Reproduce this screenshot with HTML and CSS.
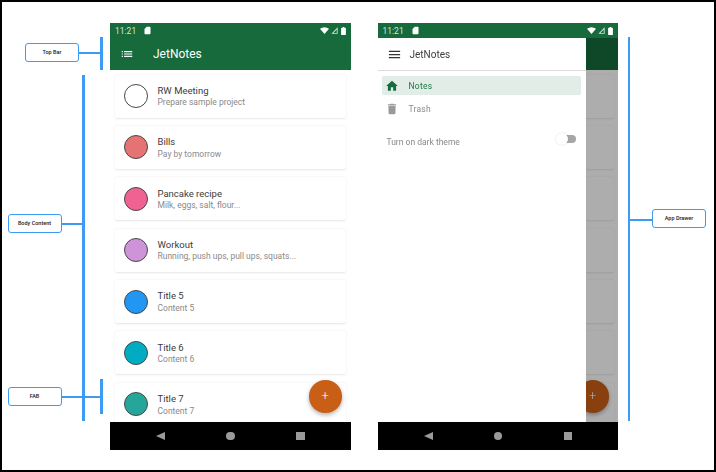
FILE: index.html
```html
<!DOCTYPE html>
<html lang="en">
<head>
    <meta charset="UTF-8">
    <title>JetNotes</title>
    <link rel="stylesheet" href="styles.css">
</head>
<body>
<div class="frame">
    <!-- notes screen -->
    <div class="phone">
        <div class="statusBar">
            <span class="time">11:21</span>
            <svg class="sdIcon" viewBox="0 0 24 24"><path d="M18 2h-8L4 8v12c0 1.1.9 2 2 2h12c1.1 0 2-.9 2-2V4c0-1.1-.9-2-2-2z"/></svg>
            <span class="statusRight">
                <svg class="wifiIcon" viewBox="0 0 24 18"><path d="M12 18 24 4C20 1.400 16 0 12 0S4 1.400 0 4z"/></svg>
                <svg class="signalIcon" viewBox="0 0 20 20"><path d="M19 1v18H1zM16.500 7 7 17h9.500z" fill-rule="evenodd"/></svg>
                <svg class="batteryIcon" viewBox="0 0 12 20"><path d="M4 0h4v2h2.500c.8 0 1.500.7 1.500 1.500v15c0 .8-.7 1.500-1.500 1.500h-9C.7 20 0 19.300 0 18.500v-15C0 2.700.7 2 1.500 2H4z"/></svg>
            </span>
        </div>
        <div class="topBar">
            <svg class="listIcon" viewBox="0 0 24 24"><path d="M3 13h2v-2H3v2zm0 4h2v-2H3v2zm0-8h2V7H3v2zm4 4h14v-2H7v2zm0 4h14v-2H7v2zM7 7v2h14V7H7z"/></svg>
            <span class="topTitle">JetNotes</span>
        </div>
        <div class="noteList">
            <div class="note">
                <span class="dot dot_white"></span>
                <div class="noteBody"><div class="noteTitle">RW Meeting</div><div class="noteText">Prepare sample project</div></div>
            </div>
            <div class="note">
                <span class="dot dot_red"></span>
                <div class="noteBody"><div class="noteTitle">Bills</div><div class="noteText">Pay by tomorrow</div></div>
            </div>
            <div class="note">
                <span class="dot dot_pink"></span>
                <div class="noteBody"><div class="noteTitle">Pancake recipe</div><div class="noteText">Milk, eggs, salt, flour...</div></div>
            </div>
            <div class="note">
                <span class="dot dot_purple"></span>
                <div class="noteBody"><div class="noteTitle">Workout</div><div class="noteText">Running, push ups, pull ups, squats...</div></div>
            </div>
            <div class="note">
                <span class="dot dot_blue"></span>
                <div class="noteBody"><div class="noteTitle">Title 5</div><div class="noteText">Content 5</div></div>
            </div>
            <div class="note">
                <span class="dot dot_cyan"></span>
                <div class="noteBody"><div class="noteTitle">Title 6</div><div class="noteText">Content 6</div></div>
            </div>
            <div class="note">
                <span class="dot dot_teal"></span>
                <div class="noteBody"><div class="noteTitle">Title 7</div><div class="noteText">Content 7</div></div>
            </div>
        </div>
        <div class="fab">+</div>
        <div class="navBar">
            <span class="navBack"></span>
            <span class="navHome"></span>
            <span class="navRecent"></span>
        </div>
    </div>

    <!-- same screen with the drawer open -->
    <div class="phone">
        <div class="statusBar">
            <span class="time">11:21</span>
            <svg class="sdIcon" viewBox="0 0 24 24"><path d="M18 2h-8L4 8v12c0 1.1.9 2 2 2h12c1.1 0 2-.9 2-2V4c0-1.1-.9-2-2-2z"/></svg>
            <span class="statusRight">
                <svg class="wifiIcon" viewBox="0 0 24 18"><path d="M12 18 24 4C20 1.400 16 0 12 0S4 1.400 0 4z"/></svg>
                <svg class="signalIcon" viewBox="0 0 20 20"><path d="M19 1v18H1zM16.500 7 7 17h9.500z" fill-rule="evenodd"/></svg>
                <svg class="batteryIcon" viewBox="0 0 12 20"><path d="M4 0h4v2h2.500c.8 0 1.500.7 1.500 1.500v15c0 .8-.7 1.500-1.500 1.500h-9C.7 20 0 19.300 0 18.500v-15C0 2.700.7 2 1.500 2H4z"/></svg>
            </span>
        </div>
        <div class="topBar"></div>
        <div class="noteList">
            <div class="note"></div>
            <div class="note"></div>
            <div class="note"></div>
            <div class="note"></div>
            <div class="note"></div>
            <div class="note"></div>
            <div class="note"></div>
        </div>
        <div class="fab">+</div>
        <div class="navBar">
            <span class="navBack"></span>
            <span class="navHome"></span>
            <span class="navRecent"></span>
        </div>
        <div class="scrim"></div>
        <div class="drawer">
            <div class="drawerHeader">
                <svg class="menuIcon" viewBox="0 0 24 24"><path d="M3 18h18v-2H3v2zm0-5h18v-2H3v2zm0-7v2h18V6H3z"/></svg>
                <span class="drawerTitle">JetNotes</span>
            </div>
            <div class="drawerItem drawerItem_active">
                <svg class="drawerIcon" viewBox="0 0 24 24"><path d="M10 20v-6h4v6h5v-8h3L12 3 2 12h3v8z"/></svg>
                <span>Notes</span>
            </div>
            <div class="drawerItem">
                <svg class="drawerIcon" viewBox="0 0 24 24"><path d="M6 19c0 1.100.9 2 2 2h8c1.100 0 2-.9 2-2V7H6v12zM19 4h-3.500l-1-1h-5l-1 1H5v2h14V4z"/></svg>
                <span>Trash</span>
            </div>
            <div class="themeRow">
                <span>Turn on dark theme</span>
                <span class="switch"><span class="switchThumb"></span></span>
            </div>
        </div>
    </div>

    <!-- callouts -->
    <div class="callout callout_top">Top Bar</div>
    <div class="wire wire_top"></div>
    <div class="rail rail_top"></div>

    <div class="callout callout_body">Body Content</div>
    <div class="wire wire_body"></div>
    <div class="rail rail_body"></div>

    <div class="callout callout_fab">FAB</div>
    <div class="wire wire_fab"></div>
    <div class="rail rail_fab"></div>

    <div class="callout callout_drawer">App Drawer</div>
    <div class="wire wire_drawer"></div>
    <div class="rail rail_drawer"></div>
</div>
</body>
</html>
```

FILE: styles.css
```css
* {
    box-sizing: border-box;
}

body {
    margin: 0;
    background-color: #FFFFFF;
    font-family: Roboto, "Liberation Sans", sans-serif;
}

.frame {
    position: relative;
    width: 716px;
    height: 472px;
    border: 2px solid #000000;
    padding: 21px 0 0 108px;
    display: flex;
    gap: 27px;
    align-items: flex-start;
    overflow: hidden;
    filter: blur(.35px);
}

.phone {
    position: relative;
    width: 240.500px;
    height: 427px;
    display: flex;
    flex-direction: column;
    overflow: hidden;
    background-color: #FFFFFF;
}

/* status bar */
.statusBar {
    height: 15px;
    flex: none;
    display: flex;
    align-items: center;
    padding: 0 5px;
    background-color: #166A3B;
    color: #D5E6DB;
    fill: #FFFFFF;
}

.time {
    font-size: 8.500px;
}

.sdIcon {
    width: 9px;
    height: 9px;
    margin-left: 7px;
}

.statusRight {
    margin-left: auto;
    display: flex;
    align-items: center;
    gap: 2px;
}

.wifiIcon {
    width: 9px;
    height: 7px;
}

.signalIcon {
    width: 7px;
    height: 7px;
    fill: #D5E6DB;
}

.batteryIcon {
    width: 5px;
    height: 8px;
    margin-left: 1px;
}

/* top bar */
.topBar {
    height: 32px;
    flex: none;
    display: flex;
    align-items: center;
    padding-left: 10px;
    background-color: #166A3B;
    color: #FFFFFF;
    fill: #FFFFFF;
}

.listIcon {
    width: 14px;
    height: 14px;
}

.topTitle {
    margin-left: 19px;
    font-size: 12px;
}

/* notes */
.noteList {
    flex: 1;
    overflow: hidden;
    padding: 4.500px 4.500px 0 5px;
    background-color: #FFFFFF;
}

.note {
    height: 43px;
    margin-bottom: 8.400px;
    padding-left: 9px;
    display: flex;
    align-items: center;
    gap: 9.500px;
    border-radius: 2px;
    background-color: #FFFFFF;
    box-shadow: 0 .5px 2px rgba(0, 0, 0, .1);
}

.dot {
    width: 24px;
    height: 24px;
    flex: none;
    border-radius: 50%;
    border: 1px solid #4A4A4A;
}

.dot_white { background-color: #FFFFFF; }
.dot_red { background-color: #E57373; }
.dot_pink { background-color: #F06292; }
.dot_purple { background-color: #CE93D8; }
.dot_blue { background-color: #2196F3; }
.dot_cyan { background-color: #00ACC1; }
.dot_teal { background-color: #26A69A; }

.noteTitle {
    font-size: 9.500px;
    line-height: 13px;
    color: #3C3C3C;
}

.noteText {
    font-size: 8.500px;
    line-height: 11px;
    margin-top: 0.500px;
    color: #8A8A8A;
}

.fab {
    position: absolute;
    right: 9px;
    top: 357px;
    width: 32.500px;
    height: 32.500px;
    border-radius: 50%;
    background-color: #C95F16;
    color: #FFFFFF;
    font-size: 13px;
    font-weight: 300;
    line-height: 32px;
    text-align: center;
    box-shadow: 0 2px 4px rgba(0, 0, 0, .3);
}

/* android nav */
.navBar {
    height: 28px;
    flex: none;
    display: flex;
    align-items: center;
    justify-content: space-between;
    padding: 0 46px;
    background-color: #000000;
    position: relative;
}

.navBack {
    width: 0;
    height: 0;
    border-style: solid;
    border-width: 4.750px 9px 4.750px 0;
    border-color: transparent #9A9A9A transparent transparent;
}

.navHome {
    width: 8.500px;
    height: 8.500px;
    border-radius: 50%;
    background-color: #9A9A9A;
}

.navRecent {
    width: 8.500px;
    height: 8.500px;
    background-color: #9A9A9A;
}

/* drawer */
.scrim {
    position: absolute;
    left: 0;
    right: 0;
    top: 15px;
    bottom: 28px;
    background-color: rgba(0, 0, 0, .32);
}

.drawer {
    position: absolute;
    left: 0;
    top: 15px;
    bottom: 28px;
    width: 208px;
    background-color: #FFFFFF;
    padding: 0 5px 0 4px;
}

.drawerHeader {
    height: 33px;
    margin: 0 -5px 5px -4px;
    padding-left: 9px;
    display: flex;
    align-items: center;
    border-bottom: 1px solid #DDDDDD;
    fill: #333333;
}

.menuIcon {
    width: 15px;
    height: 15px;
}

.drawerTitle {
    margin-left: 8px;
    font-size: 10px;
    color: #3C3C3C;
}

.drawerItem {
    height: 19px;
    margin-bottom: 4.500px;
    padding-left: 3px;
    display: flex;
    align-items: center;
    gap: 10px;
    font-size: 8.500px;
    letter-spacing: .25px;
    color: #8A8A8A;
    fill: #9A9A9A;
    border-radius: 2px;
}

.drawerItem_active {
    background-color: #E1EDE6;
    color: #1E7A45;
    fill: #166A3B;
}

.drawerIcon {
    width: 14px;
    height: 14px;
}

.themeRow {
    margin-top: 16px;
    padding: 0 5px;
    height: 14px;
    display: flex;
    align-items: center;
    justify-content: space-between;
    font-size: 8.500px;
    color: #8A8A8A;
}

.switch {
    position: relative;
    width: 16px;
    height: 8px;
    margin-bottom: 5px;
    border-radius: 4px;
    background-color: #A6A6A6;
}

.switchThumb {
    position: absolute;
    left: -4px;
    top: -2px;
    width: 12px;
    height: 12px;
    border-radius: 50%;
    background-color: #FFFFFF;
    box-shadow: 0 0 2px rgba(0, 0, 0, .15);
}

/* callouts, coordinates are relative to the frame */
.callout {
    position: absolute;
    width: 54px;
    height: 19px;
    border: 1.500px solid #3D9BF3;
    border-radius: 3px;
    background-color: #FFFFFF;
    color: #222222;
    font-size: 5.500px;
    font-weight: 500;
    line-height: 16px;
    text-align: center;
}

.wire {
    position: absolute;
    height: 1.500px;
    background-color: #3D9BF3;
}

.rail {
    position: absolute;
    width: 2.500px;
    background-color: #3D9BF3;
}

.callout_top { left: 23px; top: 41px; }
.wire_top { left: 77px; top: 50px; width: 23px; }
.rail_top { left: 98px; top: 35px; height: 33px; }

.callout_body { left: 5.500px; top: 212px; }
.wire_body { left: 59px; top: 221px; width: 23px; }
.rail_body { left: 80px; top: 73px; height: 346px; }

.callout_fab { left: 5.500px; top: 385px; }
.wire_fab { left: 59px; top: 394px; width: 41px; }
.rail_fab { left: 98px; top: 377px; height: 35px; }

.callout_drawer { left: 650px; top: 207px; }
.wire_drawer { left: 626px; top: 217px; width: 25px; }
.rail_drawer { left: 625.500px; top: 35px; height: 384px; }
```
